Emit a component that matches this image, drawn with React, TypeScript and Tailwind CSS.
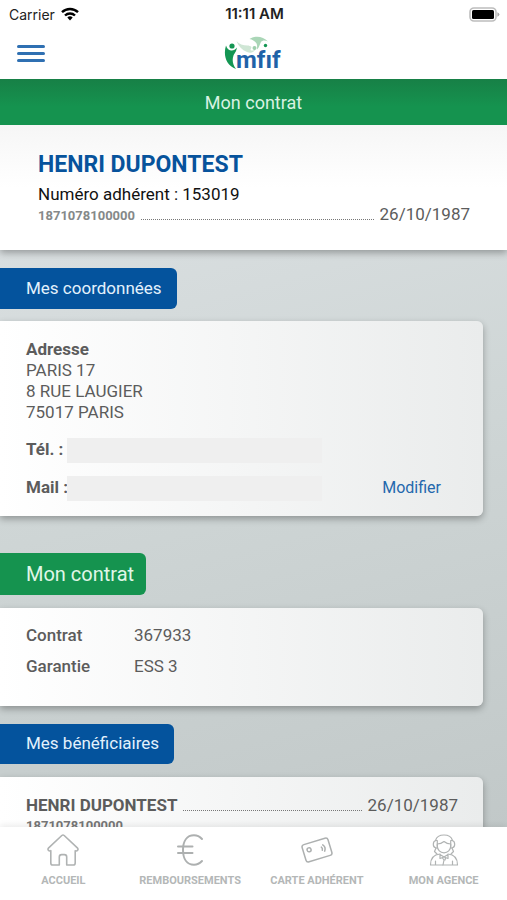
import type { ReactNode } from 'react';

const MEMBER = {
  name: 'HENRI DUPONTEST',
  number: '153019',
  insee: '1871078100000',
  birthDate: '26/10/1987',
};

const ADDRESS = ['PARIS 17', '8 RUE LAUGIER', '75017 PARIS'];

const CONTRACT = [
  { label: 'Contrat', value: '367933' },
  { label: 'Garantie', value: 'ESS 3' },
];

const WifiIcon = () => (
  <svg width="18" height="14" viewBox="0 0 18 14" fill="none" stroke="#000" strokeWidth="2.4" aria-hidden="true">
    <path d="M1 5.2a11.5 11.5 0 0 1 16 0" />
    <path d="M4 8.5a7.2 7.2 0 0 1 10 0" />
    <path d="M6.3 10.6a3.9 3.9 0 0 1 5.4 0L9 13.4z" fill="#000" stroke="none" />
  </svg>
);

const BatteryIcon = () => (
  <svg width="31" height="15" viewBox="0 0 31 15" aria-hidden="true">
    <rect x="1" y="1" width="26" height="13" rx="4" fill="#fff" stroke="#bdbdbd" strokeWidth="1.6" />
    <rect x="3" y="3" width="22" height="9" rx="1.5" fill="#000" />
    <path d="M28.4 5.2v4.6q2-.8 2-2.3t-2-2.3z" fill="#a8a8a8" />
  </svg>
);

const Logo = () => (
  <svg width="58" height="40" viewBox="0 0 58 40" role="img" aria-label="mfif">
    <path d="M12.5 7c2.5 3 6.5 4.5 11 4.5 1.5 0 3 .5 4 1.5l-1 3c1.5 1 3.500.5 5-.5-1.500 3-5 4-8.500 2.500C18 16 14.500 12.500 12.500 7z" fill="#cfe6d5" />
    <circle cx="30.5" cy="14" r="2" fill="#9fcfad" />
    <path d="M25.5 5C30 1.5 39 1.5 44 7.500c-3-1.500-5.500-1.500-7 .5-1.500 2.500-1.500 5-4 7.500 0-3 .5-5-1-6.800C30.500 7 28.500 5.500 25.500 5z" fill="#aad6b7" />
    <circle cx="8" cy="12" r="2.6" fill="#149653" />
    <path
      d="M2 11.500C-1 21 2 31.500 12 35 8.500 30.500 8 25.500 9.500 21.500c.8-2.200 2.900-3.500 3.400-8-1.500 2-3.500 3.200-5.900 2.900-2.500-.4-4-1.900-5-4.900z"
      fill="#149653"
    />
    <text x="12" y="34" fontFamily="Roboto, sans-serif" fontSize="24" fontWeight="700" fill="#1f62a8">
      mfıf
    </text>
    <circle cx="41.5" cy="11.5" r="1.7" fill="#149653" />
  </svg>
);

const HomeIcon = () => (
  <svg width="32" height="32" viewBox="0 0 32 32" fill="none" stroke="#b0b3b3" strokeWidth="1.6" strokeLinejoin="round" aria-hidden="true">
    <path d="M14.8 1.5 1.4 14.2c-1.2 1.7.6 3.4 2.4 2.500v12.200q0 2.100 2 2.100h6.500v-8q0-2.400 2.300-2.400h2.800q2.300 0 2.300 2.400v8h6.500q2 0 2-2.100V16.700c1.800.9 3.600-.8 2.400-2.500L17.200 1.500q-1.200-1-2.400 0z" />
  </svg>
);

const EuroIcon = () => (
  <svg width="32" height="32" viewBox="0 0 32 32" fill="none" stroke="#adb0b0" strokeWidth="2" strokeLinecap="round" aria-hidden="true">
    <path d="M28 5C25.500 2.200 23 1.200 20 1.200 13 1.200 9 7 9 16s4 14.800 11 14.800c3 0 5.500-1 8-3.800" />
    <path d="M4 12.500h14.500M4 19h14.500" />
  </svg>
);

const CardIcon = () => (
  <svg width="32" height="32" viewBox="0 0 32 32" fill="none" stroke="#adb0b0" strokeWidth="1.5" strokeLinecap="round" aria-hidden="true">
    <g transform="rotate(-17 16 16)">
      <rect x="2.5" y="7" width="27" height="18" rx="2.5" />
      <circle cx="8.5" cy="13.5" r="2" />
      <path d="M21 14.500q1.200 1.500 0 3.200M23 12.800q2.600 3.200 0 6.500" />
    </g>
  </svg>
);

const AgentIcon = () => (
  <svg width="32" height="32" viewBox="0 0 32 32" fill="none" stroke="#b0b3b3" strokeWidth="1.2" strokeLinejoin="round" strokeLinecap="round" aria-hidden="true">
    <path d="M7.500 6.500C8.500 3 12 1 16 1s7.500 2 8.500 5.500" />
    <path d="M9.300 6.500H8q-2.700.5-2.700 3.700T8 14h1.300zM22.700 6.500H24q2.700.5 2.700 3.700T24 14h-1.300z" />
    <path d="M9.300 10q3.700 0 6.700-2.500 3 2.500 6.700 2.500v2c0 4-3 6.800-6.700 6.800S9.300 16 9.300 12z" />
    <path d="M8 14l-1.500 3.500L9 20M24 14l1.500 3.500L23 20" />
    <path d="M12 20.500v4l4-1.500 4 1.500v-4l-4 2.500zM14.500 24l1.500 2-1 5M17.500 24l-.5 2" />
    <path d="M12 20c-6.500.5-9.500 3.500-9.500 11h27c0-7.500-3-10.500-9.500-11M7.500 27v4M24.500 27v4" />
  </svg>
);

const TABS = [
  { label: 'ACCUEIL', icon: <HomeIcon /> },
  { label: 'REMBOURSEMENTS', icon: <EuroIcon /> },
  { label: 'CARTE ADHÉRENT', icon: <CardIcon /> },
  { label: 'MON AGENCE', icon: <AgentIcon /> },
];

const Leader = () => <span className="mx-1.5 flex-1 border-b border-dotted border-[#777]" />;

const Panel = ({ className, children }: { className: string; children: ReactNode }) => (
  <div
    className={`mr-6 rounded-r-md bg-linear-to-r from-white to-[#eaecec] pl-[26px] pr-[25px] text-[17px] text-[#5c5c5c] shadow-[0_3px_7px_rgba(0,0,0,0.3)] ${className}`}
  >
    {children}
  </div>
);

const StatusBar = () => (
  <div className="grid h-7 grid-cols-3 items-center bg-white pl-[9px] pr-[7px] font-['Inter',sans-serif] text-[#222]">
    <div className="flex items-center gap-1.5 text-[14px]">
      Carrier
      <WifiIcon />
    </div>
    <div className="text-center text-[15px] font-semibold">11:11 AM</div>
    <div className="flex justify-end">
      <BatteryIcon />
    </div>
  </div>
);

const Header = () => (
  <header className="grid h-[51px] grid-cols-3 items-center bg-white px-[17px]">
    <button type="button" aria-label="Menu" className="flex w-7 flex-col gap-1">
      <span className="h-[3px] rounded bg-[#2f70b2]" />
      <span className="h-[3px] rounded bg-[#2f70b2]" />
      <span className="h-[3px] rounded bg-[#2f70b2]" />
    </button>
    <div className="flex justify-center">
      <Logo />
    </div>
  </header>
);

const TabBar = () => (
  <nav className="grid h-[73px] shrink-0 grid-cols-4 bg-white shadow-[0_-2px_6px_rgba(0,0,0,0.08)]">
    {TABS.map((tab) => (
      <a key={tab.label} href="#" className="flex flex-col items-center gap-2 pt-[7px] text-[11px] font-bold leading-[14px] text-[#b4b7b7]">
        {tab.icon}
        <span className="whitespace-nowrap">{tab.label}</span>
      </a>
    ))}
  </nav>
);

export default function App() {
  return (
    <div className="flex h-screen flex-col overflow-hidden bg-linear-165 from-[#e2e6e9] via-[#cfd6d6] to-[#bfc6c6] font-['Roboto',sans-serif]">
      <StatusBar />
      <Header />
      <h1 className="flex h-[46px] shrink-0 items-center justify-center bg-linear-to-b from-[#178046] to-[#15934f] to-60% text-[18px] text-[#d9f2e2]">
        Mon contrat
      </h1>

      <main className="min-h-0 flex-1 overflow-hidden">
        <section className="bg-linear-to-b from-[#f6f6f6] to-white to-50% pb-6 pl-[38px] pr-[37px] pt-[25px] shadow-[0_3px_7px_rgba(0,0,0,0.3)]">
          <h2 className="text-[23px] font-bold leading-[29px] text-[#07539c]">{MEMBER.name}</h2>
          <p className="text-[17px] leading-[30px] text-[#111]">Numéro adhérent : {MEMBER.number}</p>
          <div className="-mt-[5px] flex items-baseline leading-[20px]">
            <span className="text-[13px] font-bold text-[#858989]">{MEMBER.insee}</span>
            <Leader />
            <span className="text-[17px] text-[#5c5c5c]">{MEMBER.birthDate}</span>
          </div>
        </section>

        <section>
          <h2 className="mt-[18px] flex h-[41px] w-fit items-center rounded-r-md bg-[#04539d] pl-[26px] pr-[15px] text-[17px] text-[#e3f1fc]">
            Mes coordonnées
          </h2>
          <Panel className="mt-3 pb-[9px] pt-[18px]">
            <h3 className="font-bold leading-[21px]">Adresse</h3>
            <address className="not-italic leading-[21px]">
              {ADDRESS.map((line) => (
                <div key={line}>{line}</div>
              ))}
            </address>
            <dl className="mt-2 grid grid-cols-[41px_255px_1fr] items-center">
              <dt className="flex h-[38px] items-center whitespace-nowrap font-bold">Tél. :</dt>
              <dd className="h-[25px] bg-[#efefef]" />
              <dd />
              <dt className="flex h-[38px] items-center whitespace-nowrap font-bold">Mail :</dt>
              <dd className="h-[25px] bg-[#efefef]" />
              <dd className="pr-[17px] text-right text-[16px] text-[#2468ad]">
                <a href="#">Modifier</a>
              </dd>
            </dl>
          </Panel>
        </section>

        <section>
          <h2 className="mt-[37px] flex h-[42px] w-fit items-center rounded-r-md bg-[#15934f] pl-[26px] pr-3 text-[20px] text-[#e0f7e8]">
            Mon contrat
          </h2>
          <Panel className="mt-[13px] pb-6 pt-3">
            <table>
              <tbody>
                {CONTRACT.map((row) => (
                  <tr key={row.label} className="h-[31px]">
                    <th scope="row" className="w-[108px] p-0 text-left font-medium">
                      {row.label}
                    </th>
                    <td className="p-0">{row.value}</td>
                  </tr>
                ))}
              </tbody>
            </table>
          </Panel>
        </section>

        <section>
          <h2 className="mt-[18px] flex h-10 w-fit items-center rounded-r-md bg-[#04539d] pl-[26px] pr-[15px] text-[17px] text-[#e3f1fc]">
            Mes bénéficiaires
          </h2>
          <Panel className="mt-[13px] pb-6 pt-[18px]">
            <div className="flex items-baseline leading-[20px]">
              <span className="font-bold">{MEMBER.name}</span>
              <Leader />
              <span>{MEMBER.birthDate}</span>
            </div>
            <p className="mt-0.5 text-[13px] font-bold leading-[18px] text-[#777]">{MEMBER.insee}</p>
          </Panel>
        </section>
      </main>

      <TabBar />
    </div>
  );
}
